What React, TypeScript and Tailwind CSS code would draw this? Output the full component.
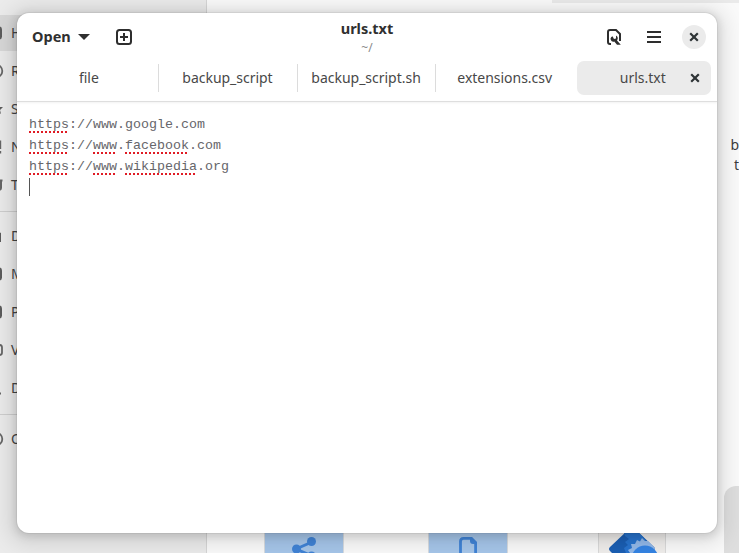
import React from "react";

const ui = "font-['Noto_Sans',sans-serif]";

type PlaceIcon = "box" | "circle" | "star" | "excl" | "bin" | "doc" | "video" | "arrow";

function PlaceGlyph({ kind }: { kind: PlaceIcon }) {
  return (
    <svg width="4" height="16" viewBox="0 0 4 16" className="shrink-0" fill="none" stroke="#666" strokeWidth="1.8">
      {kind === "box" && <rect x="-10" y="1.5" width="12" height="13" rx="3" fill="#5c5c5c" stroke="none" />}
      {kind === "circle" && <circle cx="-4" cy="8" r="6.3" />}
      {kind === "star" && <path d="M-4 6H3L0 9L1 13L-3 10Z" fill="#5c5c5c" stroke="none" />}
      {kind === "excl" && <path d="M0.3 1.5V10M0.3 12V14.5" />}
      {kind === "bin" && <path d="M-4 3.5H2.5M1 3V11Q1 13 -2 13" strokeWidth="2" />}
      {kind === "doc" && <path d="M-4 3L1 5V14H-4" fill="#5c5c5c" stroke="none" />}
      {kind === "video" && <rect x="-9" y="3" width="11" height="10" rx="2.5" />}
      {kind === "arrow" && <path d="M-3 13.5H1" />}
    </svg>
  );
}

function Place({ letter, kind, active = false }: { letter: string; kind: PlaceIcon; active?: boolean }) {
  return (
    <div className="h-[38px] py-px">
      <div className={`flex h-9 items-center gap-[7px] pb-px text-[14px] text-[#444] ${active ? "bg-[#d8d8d8]" : ""}`}>
        <PlaceGlyph kind={kind} />
        <span>{letter}</span>
      </div>
    </div>
  );
}

function Sidebar() {
  return (
    <aside className="h-full w-[207px] shrink-0 border-r border-[#d6d6d6] bg-[#ebebeb] pt-[14px]">
      <Place letter="H" kind="box" active />
      <Place letter="R" kind="circle" />
      <Place letter="S" kind="star" />
      <Place letter="N" kind="excl" />
      <Place letter="T" kind="bin" />
      <div className="mt-[7px] mb-[5px] h-px bg-[#cecece]" />
      <Place letter="D" kind="doc" />
      <Place letter="M" kind="box" />
      <Place letter="P" kind="box" />
      <Place letter="V" kind="video" />
      <Place letter="D" kind="arrow" />
      <div className="mt-[7px] mb-[5px] h-px bg-[#cecece]" />
      <Place letter="O" kind="circle" />
    </aside>
  );
}

function Files() {
  return (
    <main className="flex h-full flex-1 flex-col bg-[#fafafa]">
      <div className="ml-[345px] h-[3px] bg-[#eaeaea]" />
      <div className="mt-[132px] flex flex-col items-end text-[14px] leading-[20px] text-[#3c3c3c]">
        <span>b</span>
        <span>t</span>
      </div>
      <div className="mt-[311px] ml-[517px] h-[67px] rounded-tl-[12px] bg-[#dedede]" />
      <div className="-mt-5 flex h-5">
        <div className="ml-[58px] h-5 w-[78px] bg-[#a6c6ea] outline outline-[#d8dce0]">
          <svg width="78" height="20" fill="#4083d6">
            <path d="M31 16L47 9M31 16L47 23" stroke="#4083d6" strokeWidth="3" />
            <circle cx="31.5" cy="16" r="4.5" />
            <circle cx="46.5" cy="8.5" r="4.5" />
            <circle cx="46.5" cy="23" r="4.5" />
          </svg>
        </div>
        <div className="ml-[86px] h-5 w-[78px] bg-[#a6c6ea] outline outline-[#d8dce0]">
          <svg width="78" height="20" fill="none" stroke="#4083d6" strokeWidth="2.8">
            <path d="M31.5 22V8.5Q31.5 5.4 34.5 5.4H42L46.6 10V22" />
            <path d="M41 4H43L48 9V11H44Q41 11 41 8Z" fill="#4083d6" stroke="none" />
          </svg>
        </div>
        <div className="ml-[92px] h-5 w-[66px] bg-[#f0eeec] outline outline-[#dadada]">
          <svg width="66" height="20">
            <path d="M29 -3Q33 -6 37 -3L55 14Q57 16 55 18L51 22H15L11 18Q9 16 11 14Z" fill="#1b5fb4" />
            <path d="M24 -3H37L47 7L38 20H27L25 15L29 12L26 9L30 6L26 3Z" fill="#2874cf" />
            <path d="M31 20L29 17L33 15L32 11L36 11L38 7L41 8.5L43 5L46 8L49 8L55 14Q57 16 55 18L53 20Z" fill="#93b9e9" />
            <circle cx="46" cy="26" r="13.5" fill="#3584e4" />
          </svg>
        </div>
      </div>
    </main>
  );
}

function CloseGlyph() {
  return (
    <svg width="10" height="10" viewBox="0 0 10 10" fill="none" stroke="#2e3436" strokeWidth="2.2">
      <path d="M1.2 1.2L8.8 8.8M8.8 1.2L1.2 8.8" />
    </svg>
  );
}

function HeaderBar() {
  return (
    <header className="grid h-12 grid-cols-3 items-center">
      <div className="flex items-center pl-[15px]">
        <span className="text-[14.5px] font-bold text-[#303030]">Open</span>
        <svg width="12" height="6" className="ml-[7px]" fill="#303030">
          <path d="M0 0H12L6 6Z" />
        </svg>
        <svg width="16" height="16" className="ml-[26px]" fill="none" stroke="#2e2e2e" strokeWidth="2">
          <rect x="1" y="1" width="14" height="14" rx="2.5" />
          <path d="M8 4V12M4 8H12" />
        </svg>
      </div>
      <div className="flex flex-col items-center pt-[1px]">
        <span className="text-[14.5px] leading-[19px] font-bold text-[#303030]">urls.txt</span>
        <span className="pt-px text-[12px] leading-[18px] text-[#8b8b8b]">~/</span>
      </div>
      <div className="flex items-center justify-end pr-[11px]">
        <svg width="16" height="16" viewBox="0 0 16 16" fill="none" stroke="#2e2e2e">
          <path d="M5 15H4Q2 15 2 13V3Q2 1 4 1H10L14 5V12" strokeWidth="2" />
          <path d="M10 6.5V9.5L8 10L6.5 7.3Q3.8 8.7 4.8 11Q5.8 13.3 8.3 12.5L11 15.7H14.8L11 11.5Q13 8.5 10 6.5Z" fill="#2e2e2e" stroke="none" />
        </svg>
        <svg width="14" height="12" className="ml-[25px]" fill="#2e2e2e">
          <path d="M0 0H14V2H0ZM0 5H14V7H0ZM0 10H14V12H0Z" />
        </svg>
        <button className="ml-[21px] flex size-6 items-center justify-center rounded-full bg-[#ebebeb]">
          <CloseGlyph />
        </button>
      </div>
    </header>
  );
}

function Tab({ title, active = false }: { title: string; active?: boolean }) {
  return (
    <div className={`flex h-[34px] w-[134px] items-center rounded-[7px] ${active ? "bg-[#ebebeb]" : ""}`}>
      <span className={`flex-1 pb-[2px] text-center text-[14px] whitespace-nowrap text-[#484848] ${active ? "pl-[19px]" : "pr-[1px] tracking-[-0.02px]"}`}>
        {title}
      </span>
      {active && (
        <span className="mr-[11px]">
          <CloseGlyph />
        </span>
      )}
    </div>
  );
}

function Divider({ hidden = false }: { hidden?: boolean }) {
  return <div className={`mx-[1.8px] mt-[3px] h-7 w-px ${hidden ? "" : "bg-[#dcdcdc]"}`} />;
}

function Misspelt({ children }: { children: string }) {
  return (
    <span className="underline decoration-[#e01b24] decoration-dotted decoration-[1.5px] underline-offset-[3px] [text-decoration-skip-ink:none]">
      {children}
    </span>
  );
}

function Editor() {
  return (
    <div className="flex-1 pt-[12px] pl-3 font-['Liberation_Mono',monospace] text-[13.33px] leading-[21px] text-[#66666a]">
      <p><Misspelt>https</Misspelt>://www.google.com</p>
      <p><Misspelt>https</Misspelt>://<Misspelt>www</Misspelt>.<Misspelt>facebook</Misspelt>.com</p>
      <p><Misspelt>https</Misspelt>://<Misspelt>www</Misspelt>.<Misspelt>wikipedia</Misspelt>.org</p>
      <div className="mt-px h-[18px] w-px bg-[#555]" />
    </div>
  );
}

export default function App() {
  return (
    <div className={`relative h-[553px] w-[739px] overflow-hidden ${ui}`}>
      <div className="flex h-full">
        <Sidebar />
        <Files />
      </div>
      <section className="absolute top-[13px] left-[17px] flex h-[520px] w-[700px] flex-col overflow-hidden rounded-[12px] bg-white shadow-[0_2px_8px_2px_rgba(0,0,0,0.13),0_3px_20px_10px_rgba(0,0,0,0.09),0_0_0_1px_rgba(0,0,0,0.05)]">
        <HeaderBar />
        <nav className="flex h-[41px] items-start pl-[5.4px]">
          <Tab title="file" />
          <Divider />
          <Tab title="backup_script" />
          <Divider />
          <Tab title="backup_script.sh" />
          <Divider />
          <Tab title="extensions.csv" />
          <Divider hidden />
          <Tab title="urls.txt" active />
        </nav>
        <div className="-mt-px h-px shrink-0 bg-[#dedede] shadow-[0_1px_2px_rgba(0,0,0,0.08)]" />
        <Editor />
      </section>
    </div>
  );
}
